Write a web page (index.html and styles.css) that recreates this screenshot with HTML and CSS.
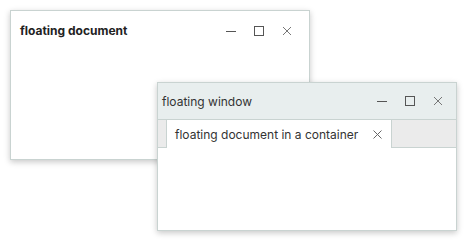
FILE: index.html
```html
<!DOCTYPE html>
<html lang="en">
<head>
    <meta charset="UTF-8">
    <meta name="viewport" content="width=device-width, initial-scale=1.0">
    <title>Floating windows</title>
    <link rel="stylesheet" href="styles.css">
</head>
<body>

    <div class="desktop">
        <div class="window doc-window">
            <div class="doc-header">
                <span class="doc-title">floating document</span>
                <div class="controls">
                    <span class="ctl"><svg width="10" height="10" viewBox="0 0 10 10"><path d="M0 5.5h10" stroke="#555" stroke-width="1"/></svg></span>
                    <span class="ctl"><svg width="10" height="10" viewBox="0 0 10 10"><rect x="0.5" y="0.5" width="9" height="9" fill="none" stroke="#555"/></svg></span>
                    <span class="ctl"><svg width="10" height="10" viewBox="0 0 10 10"><path d="M1 1l8 8M9 1l-8 8" stroke="#777"/></svg></span>
                </div>
            </div>
        </div>

        <div class="window float-window">
            <div class="win-header">
                <span class="win-title">floating window</span>
                <div class="controls">
                    <span class="ctl"><svg width="10" height="10" viewBox="0 0 10 10"><path d="M0 5.5h10" stroke="#555" stroke-width="1"/></svg></span>
                    <span class="ctl"><svg width="10" height="10" viewBox="0 0 10 10"><rect x="0.5" y="0.5" width="9" height="9" fill="none" stroke="#555"/></svg></span>
                    <span class="ctl"><svg width="10" height="10" viewBox="0 0 10 10"><path d="M1 1l8 8M9 1l-8 8" stroke="#777"/></svg></span>
                </div>
            </div>
            <div class="tabbar">
                <div class="tab">
                    <span class="tab-label">floating document in a container</span>
                    <span class="tab-close"><svg width="9" height="9" viewBox="0 0 9 9"><path d="M0.5 0.5l8 8M8.5 0.5l-8 8" stroke="#666"/></svg></span>
                </div>
            </div>
            <div class="win-body"></div>
        </div>
    </div>

</body>
</html>
```

FILE: styles.css
```css
/* basis */
body {
    margin: 0;
    font-family: Inter, "Noto Sans", sans-serif;
    font-size: 12px;
    color: #333;
    background: #fff;
}
.desktop { position: relative; width: 467px; height: 243px; overflow: hidden; }

.window {
    position: absolute;
    box-sizing: border-box;
    width: 300px;
    background: #fff;
    border: 1px solid #c9d3d1;
    box-shadow: 0 2px 6px rgba(0, 0, 0, 0.22);
    display: flex;
    flex-direction: column;
}
.doc-window { left: 10px; top: 10px; height: 150px; }
.float-window { left: 157px; top: 82px; height: 149px; }

.controls { display: flex; align-items: center; gap: 18px; }
.ctl { display: flex; width: 10px; height: 10px; }

/* floating document */
.doc-header { display: flex; align-items: center; justify-content: space-between; height: 39px; padding: 0 17px 0 9px; }
.doc-title { font-weight: 700; color: #222; }

/* floating window */
.win-header {
    display: flex; align-items: center; justify-content: space-between;
    height: 36px; padding: 0 13px 0 4px;
    background: #e8eeee;
    border-bottom: 1px solid #c9d3d1;
}
.tabbar {
    display: flex; height: 27px; padding-left: 8px;
    background: #ebebeb;
    border-bottom: 1px solid #c9d3d1;
}
.tab {
    display: flex; align-items: center; gap: 15px;
    padding: 0 9px 0 8px; margin-bottom: -1px;
    background: #fff;
    border-left: 1px solid #c9d3d1;
    border-right: 1px solid #c9d3d1;
}
.tab-close { display: flex; }
.win-body { flex: 1; }
```
